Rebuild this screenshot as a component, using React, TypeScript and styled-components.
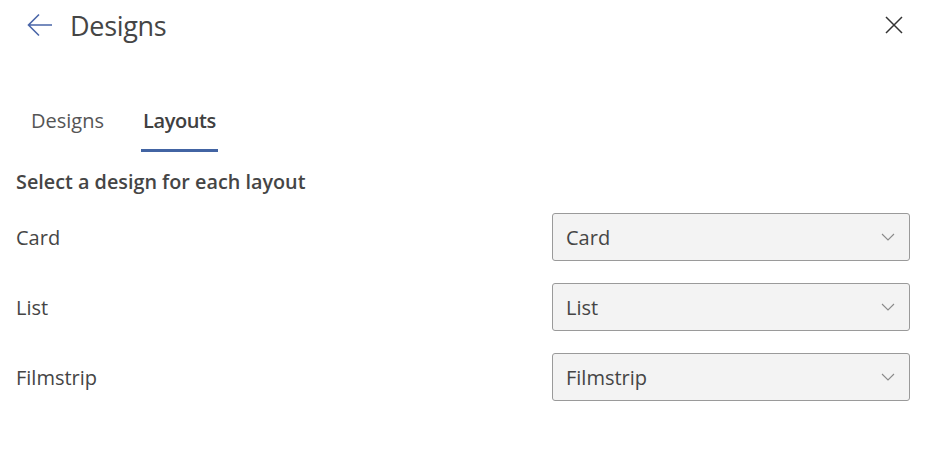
import styled, { createGlobalStyle } from 'styled-components';

const GlobalStyle = createGlobalStyle`
  body {
    margin: 0;
    background: #ffffff;
    font-family: 'Open Sans', 'Noto Sans', sans-serif;
    color: #444444;
  }
`;

const Panel = styled.div`
  width: 928px;
  height: 450px;
  box-sizing: border-box;
  display: flex;
  flex-direction: column;
`;

const Header = styled.div`
  height: 50px;
  display: flex;
  align-items: center;
  padding: 0 27px;
`;

const IconButton = styled.button`
  border: none;
  background: none;
  padding: 0;
  display: flex;
  align-items: center;
  justify-content: center;
  cursor: pointer;
`;

const Title = styled.h1`
  margin: 0 0 0 17px;
  font-size: 27px;
  font-weight: 400;
  color: #454545;
  flex: 1;
  letter-spacing: -0.3px;
`;

const CloseButton = styled(IconButton)`
  margin-right: -2px;
`;

const TabList = styled.div`
  display: flex;
  gap: 35px;
  margin-top: 48px;
  padding-left: 29px;
`;

const Tab = styled.button<{ $active?: boolean }>`
  border: none;
  background: none;
  padding: 8px 2px 13px;
  line-height: 30px;
  font-family: inherit;
  font-size: 20px;
  font-weight: ${({ $active }) => ($active ? 600 : 400)};
  letter-spacing: ${({ $active }) => ($active ? '-0.4px' : '0')};
  color: ${({ $active }) => ($active ? '#404040' : '#555555')};
  border-bottom: 3px solid ${({ $active }) => ($active ? '#4264a3' : 'transparent')};
  cursor: pointer;
`;

const Content = styled.div`
  padding: 0 18px 0 16px;
  display: flex;
  flex-direction: column;
`;

const Heading = styled.h2`
  margin: 18px 0 19px;
  font-size: 19.8px;
  line-height: 24px;
  font-weight: 600;
  color: #454545;
`;

const Rows = styled.div`
  display: flex;
  flex-direction: column;
  gap: 22px;
`;

const Row = styled.div`
  display: flex;
  align-items: center;
  justify-content: space-between;
  height: 48px;
`;

const Label = styled.span`
  font-size: 20px;
  color: #454545;
`;

const Select = styled.div`
  width: 358px;
  height: 48px;
  box-sizing: border-box;
  border: 1px solid #9a9a9a;
  border-radius: 3px;
  background: #f3f3f3;
  display: flex;
  align-items: center;
  justify-content: space-between;
  padding: 0 14px 0 13px;
  font-size: 20px;
  color: #454545;
`;

const BackArrow = () => (
  <svg width="26" height="24" viewBox="0 0 26 24" fill="none">
    <path d="M25 12H2M12 1.5L1.5 12L12 22.5" stroke="#4a66a8" strokeWidth="1.6" />
  </svg>
);

const CloseIcon = () => (
  <svg width="18" height="18" viewBox="0 0 18 18" fill="none">
    <path d="M1 1L17 17M17 1L1 17" stroke="#333333" strokeWidth="1.5" />
  </svg>
);

const Chevron = () => (
  <svg width="14" height="8" viewBox="0 0 14 8" fill="none">
    <path d="M1 1L7 7L13 1" stroke="#8a8a8a" strokeWidth="1.1" />
  </svg>
);

const layouts = ['Card', 'List', 'Filmstrip'];

const App = () => {
  return (
    <Panel>
      <GlobalStyle />
      <Header>
        <IconButton aria-label="Back">
          <BackArrow />
        </IconButton>
        <Title>Designs</Title>
        <CloseButton aria-label="Close">
          <CloseIcon />
        </CloseButton>
      </Header>

      <TabList>
        <Tab>Designs</Tab>
        <Tab $active>Layouts</Tab>
      </TabList>

      <Content>
        <Heading>Select a design for each layout</Heading>
        <Rows>
          {layouts.map((name) => (
            <Row key={name}>
              <Label>{name}</Label>
              <Select>
                {name}
                <Chevron />
              </Select>
            </Row>
          ))}
        </Rows>
      </Content>
    </Panel>
  );
};

export default App;
